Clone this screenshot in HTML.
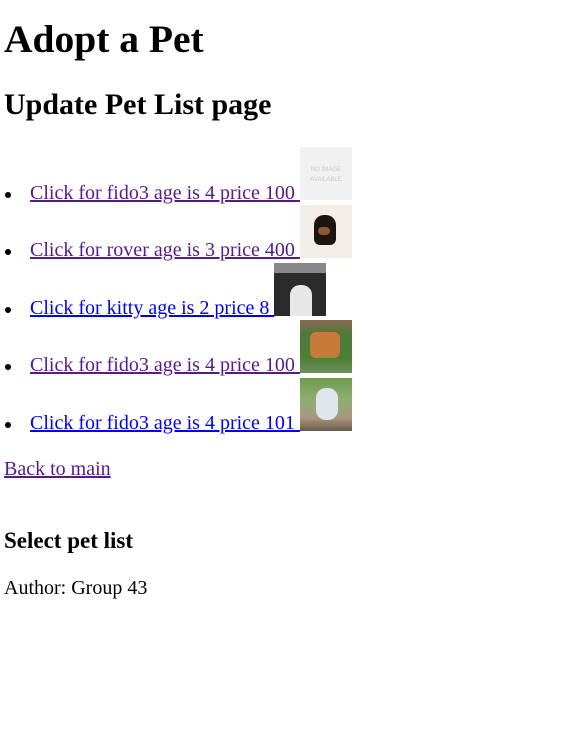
<!DOCTYPE html>
<html><head><meta charset="utf-8"><style>
body{margin:0;width:563px;height:752px;background:#fff;font-family:"Liberation Serif",serif;position:relative;overflow:hidden}
.a{position:absolute;white-space:nowrap;line-height:1.15}
h1,h2,h3{margin:0;font-weight:bold}
a{text-decoration:underline}
.v{color:#551a8b}.n{color:#0000ee}
.d{position:absolute;width:6px;height:6px;border-radius:50%;background:#000;left:5px}
.img{position:absolute;width:52px;height:53px}
</style></head><body>
<h1 class="a" style="left:4px;top:17px;font-size:39.5px">Adopt a Pet</h1>
<h2 class="a" style="left:4px;top:88px;font-size:30px">Update Pet List page</h2>

<div class="d" style="top:192px"></div>
<a class="a v" style="left:30px;top:182px;font-size:20px">Click for fido3 age is 4 price 100&nbsp;</a>
<div class="img" style="left:300px;top:147px;background:#f1f1f1;color:#c8c8c8;font:6px 'Liberation Sans',sans-serif;text-align:center;padding-top:18px;box-sizing:border-box;line-height:10px">NO IMAGE<br>AVAILABLE</div>

<div class="d" style="top:249px"></div>
<a class="a v" style="left:30px;top:239px;font-size:20px">Click for rover age is 3 price 400&nbsp;</a>
<div class="img" style="left:300px;top:205px;background:#f4eee8"><div style="position:absolute;left:14px;top:10px;width:22px;height:30px;background:#1d1410;border-radius:10px 10px 6px 6px"></div><div style="position:absolute;left:18px;top:22px;width:12px;height:8px;background:#8a5a30;border-radius:4px"></div></div>

<div class="d" style="top:307px"></div>
<a class="a n" style="left:30px;top:297px;font-size:20px">Click for kitty age is 2 price 8&nbsp;</a>
<div class="img" style="left:274px;top:263px;background:#2a2a2a"><div style="position:absolute;left:16px;top:22px;width:22px;height:31px;background:#e8e8e8;border-radius:10px 10px 0 0"></div><div style="position:absolute;left:0;top:0;width:52px;height:10px;background:#888"></div></div>

<div class="d" style="top:364px"></div>
<a class="a v" style="left:30px;top:354px;font-size:20px">Click for fido3 age is 4 price 100&nbsp;</a>
<div class="img" style="left:300px;top:320px;background:linear-gradient(#8a6a55 0,#4f7a3a 25%,#4a7f35 70%,#6f8f5a 100%)"><div style="position:absolute;left:10px;top:12px;width:30px;height:26px;background:#c77a3a;border-radius:6px"></div></div>

<div class="d" style="top:422px"></div>
<a class="a n" style="left:30px;top:412px;font-size:20px">Click for fido3 age is 4 price 101&nbsp;</a>
<div class="img" style="left:300px;top:378px;background:linear-gradient(#6f9a50 0,#8fae70 40%,#a89880 75%,#6a5a4a 100%)"><div style="position:absolute;left:16px;top:10px;width:22px;height:32px;background:#dfe6ee;border-radius:10px"></div></div>

<a class="a v" style="left:4px;top:458px;font-size:20px">Back to main</a>
<h3 class="a" style="left:4px;top:528px;font-size:23px">Select pet list</h3>
<div class="a" style="left:4px;top:577px;font-size:20px">Author: Group 43</div>
</body></html>
